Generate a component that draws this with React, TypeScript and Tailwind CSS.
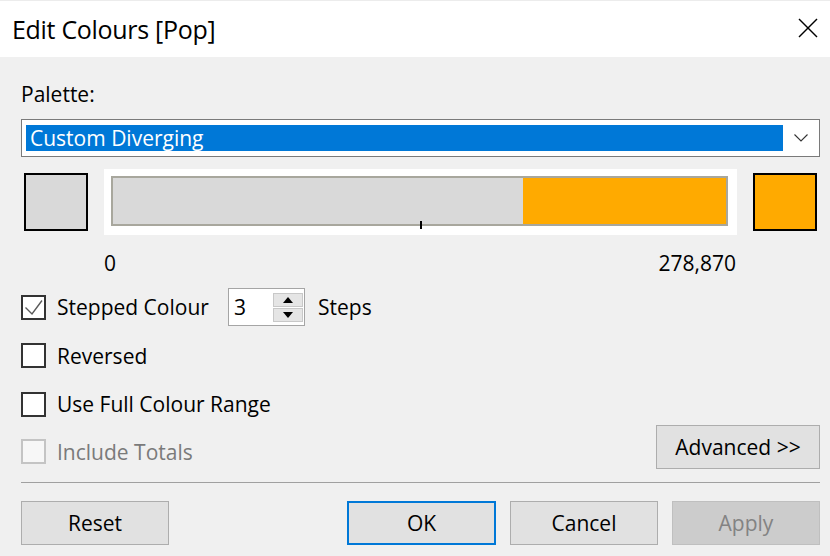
import React from "react";

function CheckBox({ checked = false, disabled = false }: { checked?: boolean; disabled?: boolean }) {
  return (
    <div
      className={
        "relative ml-[1px] w-[25px] h-[25px] border-2 shrink-0 " +
        (disabled ? "border-[#c4c4c4] bg-[#f7f7f7]" : "border-[#333333] bg-white")
      }
    >
      {checked && (
        <svg className="absolute left-0 top-0" width="21" height="21" viewBox="0 0 21 21">
          <polyline points="2.5,10.5 9,17 19,3.5" fill="none" stroke="#5a5a5a" strokeWidth="1.4" />
        </svg>
      )}
    </div>
  );
}

export default function App() {
  return (
    <div className="w-[830px] h-[556px] bg-[#f0f0f0] flex flex-col font-['Open_Sans',sans-serif] text-[21px] text-black overflow-hidden">
      {/* Title bar */}
      <div className="h-[57px] bg-white border-t border-[#ececec] flex items-center justify-between pl-3 pr-3 shrink-0">
        <span className="text-[25px] leading-[32px] tracking-[-0.3px]">Edit Colours [Pop]</span>
        <svg width="20" height="20" viewBox="0 0 20 20" className="mt-[-2px]">
          <line x1="1" y1="1" x2="19" y2="19" stroke="#000" strokeWidth="1.4" />
          <line x1="19" y1="1" x2="1" y2="19" stroke="#000" strokeWidth="1.4" />
        </svg>
      </div>

      {/* Body */}
      <div className="flex flex-col pl-5 pr-[10px]">
        <div className="mt-[23px] leading-[28px] ml-[1px]">Palette:</div>

        {/* Combo box */}
        <div className="mt-[11px] ml-[1px] h-[38px] border border-[#7a7a7a] bg-white flex items-center pl-[4px]">
          <div className="flex-1 h-[26px] bg-[#0078d7] text-white leading-[26px] pl-[4px]">Custom Diverging</div>
          <div className="w-[36px] flex items-center justify-center">
            <svg width="14" height="8" viewBox="0 0 14 8">
              <polyline points="0.5,0.5 7,7 13.5,0.5" fill="none" stroke="#333" strokeWidth="1.1" />
            </svg>
          </div>
        </div>

        {/* Colour ramp row */}
        <div className="mt-[12px] h-[66px] flex items-center">
          <div className="ml-1 w-[64px] h-[58px] border-2 border-black bg-[#d9d9d9]" />
          <div className="ml-4 w-[633px] h-[66px] bg-white pl-[7px] pt-[7px]">
            <div className="relative w-[617px] h-[50px] border-2 border-[#a8a79d] flex">
              <div className="w-[410px] h-full bg-[#d9d9d9]" />
              <div className="flex-1 h-full bg-[#ffaa00]" />
              <div className="absolute left-[307px] top-[43px] w-[2px] h-[8px] bg-black" />
            </div>
          </div>
          <div className="ml-4 w-[64px] h-[58px] border-2 border-black bg-[#ffaa00]" />
        </div>

        {/* Range labels */}
        <div className="mt-[14px] ml-[84px] w-[632px] flex justify-between leading-[28px]">
          <span>0</span>
          <span>278,870</span>
        </div>

        {/* Stepped colour */}
        <div className="mt-[11px] h-[38px] flex items-center">
          <CheckBox checked />
          <span className="ml-[11px] w-[171px] pt-[2px]">Stepped Colour</span>
          <div className="w-[77px] h-[38px] border border-[#a5a5a5] bg-white flex items-center">
            <span className="pl-[5px] w-[44px] pt-[2px]">3</span>
            <div className="flex flex-col gap-[1px] w-[30px] h-[29px]">
              <div className="h-[14px] bg-[#e5e5e5] border border-[#c8c8c8] flex items-center justify-center">
                <svg width="10" height="6" viewBox="0 0 10 6">
                  <polygon points="5,0 10,6 0,6" fill="#000" />
                </svg>
              </div>
              <div className="h-[14px] bg-[#e5e5e5] border border-[#c8c8c8] flex items-center justify-center">
                <svg width="10" height="6" viewBox="0 0 10 6">
                  <polygon points="0,0 10,0 5,6" fill="#000" />
                </svg>
              </div>
            </div>
          </div>
          <span className="ml-[13px] pt-[2px]">Steps</span>
        </div>

        {/* Reversed */}
        <div className="mt-[10px] h-[38px] flex items-center">
          <CheckBox />
          <span className="ml-[11px] pt-[3px]">Reversed</span>
        </div>

        {/* Use Full Colour Range */}
        <div className="mt-[11px] h-[38px] flex items-center">
          <CheckBox />
          <span className="ml-[11px] pt-[2px]">Use Full Colour Range</span>
        </div>

        {/* Include Totals + Advanced */}
        <div className="mt-[2px] h-[44px] flex items-start justify-between">
          <div className="mt-[7px] h-[38px] flex items-center">
            <CheckBox disabled />
            <span className="ml-[11px] pt-[3px] text-[#7a7a7a]">Include Totals</span>
          </div>
          <button className="w-[164px] h-[44px] pt-[2px] bg-[#e1e1e1] border border-[#adadad] text-black">Advanced &gt;&gt;</button>
        </div>

        {/* Separator */}
        <div className="mt-[13px] ml-[1px] h-px bg-[#a0a0a0]" />

        {/* Buttons */}
        <div className="mt-[18px] h-[44px] flex">
          <button className="ml-[1px] w-[148px] h-[44px] pt-[2px] bg-[#e1e1e1] border border-[#adadad]">Reset</button>
          <div className="flex-1" />
          <div className="flex gap-[14px]">
            <button className="w-[149px] h-[44px] pt-[2px] bg-[#e1e1e1] border-2 border-[#0078d7]">OK</button>
            <button className="w-[148px] h-[44px] pt-[2px] bg-[#e1e1e1] border border-[#adadad]">Cancel</button>
            <button className="w-[148px] h-[44px] pt-[2px] bg-[#cccccc] border border-[#bfbfbf] text-[#838383]">Apply</button>
          </div>
        </div>
      </div>
    </div>
  );
}
